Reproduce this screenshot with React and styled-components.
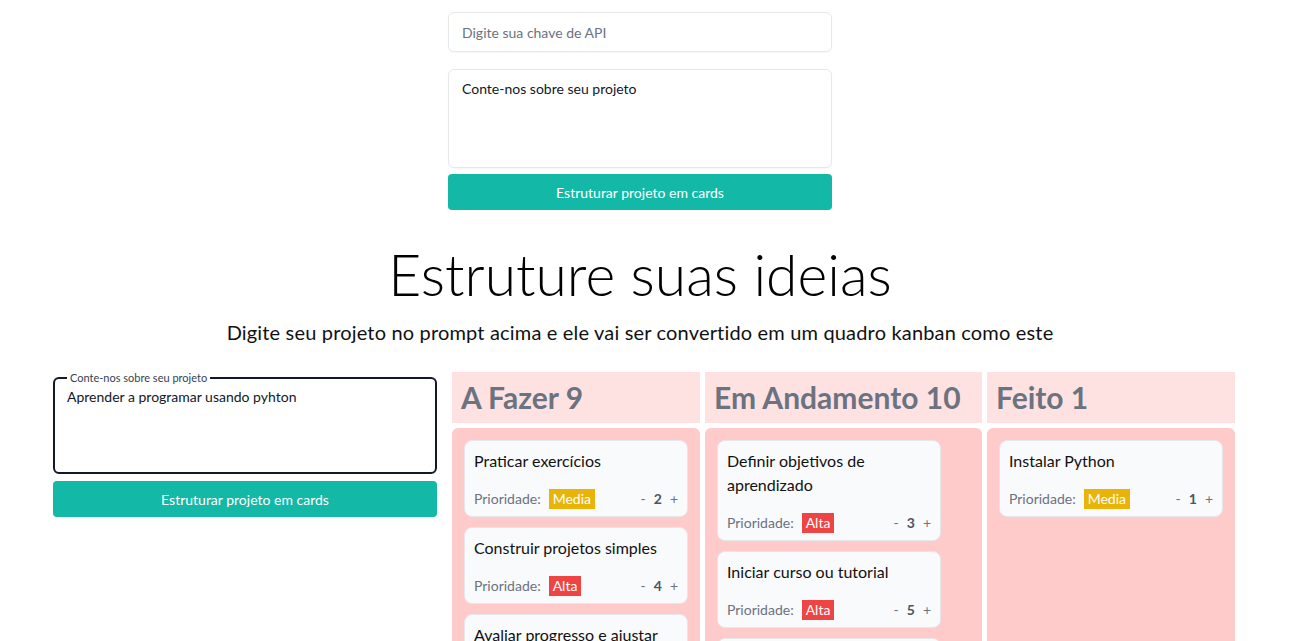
import React from "react";
import styled, { createGlobalStyle } from "styled-components";

const GlobalStyle = createGlobalStyle`
  body {
    margin: 0;
    background: #ffffff;
    font-family: "Lato", "Open Sans", sans-serif;
    color: #111827;
  }
  * { box-sizing: border-box; }
`;

const Page = styled.div`
  width: 1280px;
  display: flex;
  flex-direction: column;
  align-items: center;
  padding-top: 12px;
`;

const TopForm = styled.form`
  width: 384px;
  display: flex;
  flex-direction: column;
`;

const ApiInput = styled.input`
  height: 40px;
  border: 1px solid #e5e7eb;
  border-radius: 6px;
  padding: 0 13px;
  font-family: inherit;
  font-size: 14px;
  outline: none;
  box-shadow: 0 1px 2px rgba(0, 0, 0, 0.04);
  &::placeholder { color: #6b7280; }
`;

const PromptArea = styled.textarea`
  margin-top: 17px;
  height: 99px;
  border: 1px solid #e5e7eb;
  border-radius: 6px;
  padding: 9px 13px;
  font-family: inherit;
  font-size: 14px;
  line-height: 20px;
  resize: none;
  outline: none;
  box-shadow: 0 1px 2px rgba(0, 0, 0, 0.04);
  &::placeholder { color: #111827; }
`;

const ActionButton = styled.button`
  margin-top: ${(p) => p.$gap || 6}px;
  height: 36px;
  width: 100%;
  border: none;
  border-radius: 4px;
  background: #14b8a6;
  color: #ffffff;
  font-family: inherit;
  font-size: 14px;
  cursor: pointer;
`;

const Title = styled.h1`
  margin: 28px 0 0;
  font-size: 57px;
  line-height: 72px;
  font-weight: 300;
  color: #000;
`;

const Subtitle = styled.p`
  margin: 8px 0 0;
  font-size: 20px;
  line-height: 28px;
  letter-spacing: 0.17px;
  color: #111;
`;

const Board = styled.section`
  align-self: stretch;
  margin-top: 26px;
  padding-left: 53px;
  display: flex;
  align-items: stretch;
`;

const LeftPanel = styled.div`
  width: 384px;
  margin-right: 15px;
  display: flex;
  flex-direction: column;
`;

const Fieldset = styled.fieldset`
  margin: 0;
  height: 102px;
  border: 2px solid #111827;
  border-radius: 6px;
  padding: 0 12px;
  display: flex;
`;

const Legend = styled.legend`
  padding: 0 3px;
  margin-left: 0;
  font-size: 11px;
  line-height: 12px;
  color: #374151;
`;

const FieldText = styled.textarea`
  flex: 1;
  border: none;
  outline: none;
  resize: none;
  padding: 3px 0 0;
  font-family: inherit;
  font-size: 14px;
  line-height: 20px;
  color: #111827;
  background: transparent;
`;

const Column = styled.div`
  width: ${(p) => p.$width}px;
  margin-right: 5px;
  display: flex;
  flex-direction: column;
  gap: 5px;
`;

const ColumnHeader = styled.h2`
  margin: 0;
  background: #fee2e2;
  padding: 7px 9px 8px;
  font-size: 30px;
  line-height: 36px;
  font-weight: 700;
  color: #6b7280;
  white-space: nowrap;
`;

const ColumnBody = styled.div`
  flex: 1;
  min-height: 220px;
  background: #fecaca;
  border-radius: 6px 6px 0 0;
  padding: 12px;
  display: flex;
  flex-direction: column;
  gap: 10px;
`;

const Card = styled.div`
  width: 224px;
  background: #f9fafb;
  border: 1px solid #e5e7eb;
  border-radius: 8px;
  padding: 8px 9px 7px;
`;

const CardTitle = styled.p`
  margin: 0;
  font-size: 16px;
  line-height: 24px;
  color: #111;
`;

const CardFooter = styled.div`
  margin-top: 16px;
  display: flex;
  align-items: center;
  font-size: 14px;
  line-height: 20px;
  color: #6b7280;
`;

const Badge = styled.span`
  margin-left: 8px;
  padding: 0 4px;
  color: #fff;
  background: ${(p) => (p.$level === "Alta" ? "#ef4444" : "#eab308")};
`;

const Counter = styled.div`
  margin-left: auto;
  display: flex;
  align-items: center;
  gap: 8px;
`;

const CountValue = styled.span`
  font-weight: 700;
  color: #4b5563;
`;

const columns = [
  {
    title: "A Fazer",
    width: 248,
    cards: [
      { title: "Praticar exercícios", level: "Media", points: 2 },
      { title: "Construir projetos simples", level: "Alta", points: 4 },
      { title: "Avaliar progresso e ajustar estudos", level: "Media", points: 3 },
    ],
  },
  {
    title: "Em Andamento",
    width: 277,
    cards: [
      { title: "Definir objetivos de aprendizado", level: "Alta", points: 3 },
      { title: "Iniciar curso ou tutorial", level: "Alta", points: 5 },
      { title: "Estudar conceitos básicos", level: "Media", points: 2 },
    ],
  },
  {
    title: "Feito",
    width: 248,
    cards: [{ title: "Instalar Python", level: "Media", points: 1 }],
  },
];

export default function App() {
  return (
    <>
      <GlobalStyle />
      <Page>
        <TopForm onSubmit={(e) => e.preventDefault()}>
          <ApiInput placeholder="Digite sua chave de API" />
          <PromptArea placeholder="Conte-nos sobre seu projeto" />
          <ActionButton type="submit">Estruturar projeto em cards</ActionButton>
        </TopForm>
        <Title>Estruture suas ideias</Title>
        <Subtitle>
          Digite seu projeto no prompt acima e ele vai ser convertido em um quadro kanban como este
        </Subtitle>
        <Board>
          <LeftPanel>
            <Fieldset>
              <Legend>Conte-nos sobre seu projeto</Legend>
              <FieldText defaultValue="Aprender a programar usando pyhton" />
            </Fieldset>
            <ActionButton $gap={7}>Estruturar projeto em cards</ActionButton>
          </LeftPanel>
          {columns.map((col) => (
            <Column key={col.title} $width={col.width}>
              <ColumnHeader>
                {col.title} {col.cards.reduce((s, c) => s + c.points, 0)}
              </ColumnHeader>
              <ColumnBody>
                {col.cards.map((card) => (
                  <Card key={card.title}>
                    <CardTitle>{card.title}</CardTitle>
                    <CardFooter>
                      Prioridade:
                      <Badge $level={card.level}>{card.level}</Badge>
                      <Counter>
                        <span>-</span>
                        <CountValue>{card.points}</CountValue>
                        <span>+</span>
                      </Counter>
                    </CardFooter>
                  </Card>
                ))}
              </ColumnBody>
            </Column>
          ))}
        </Board>
      </Page>
    </>
  );
}
